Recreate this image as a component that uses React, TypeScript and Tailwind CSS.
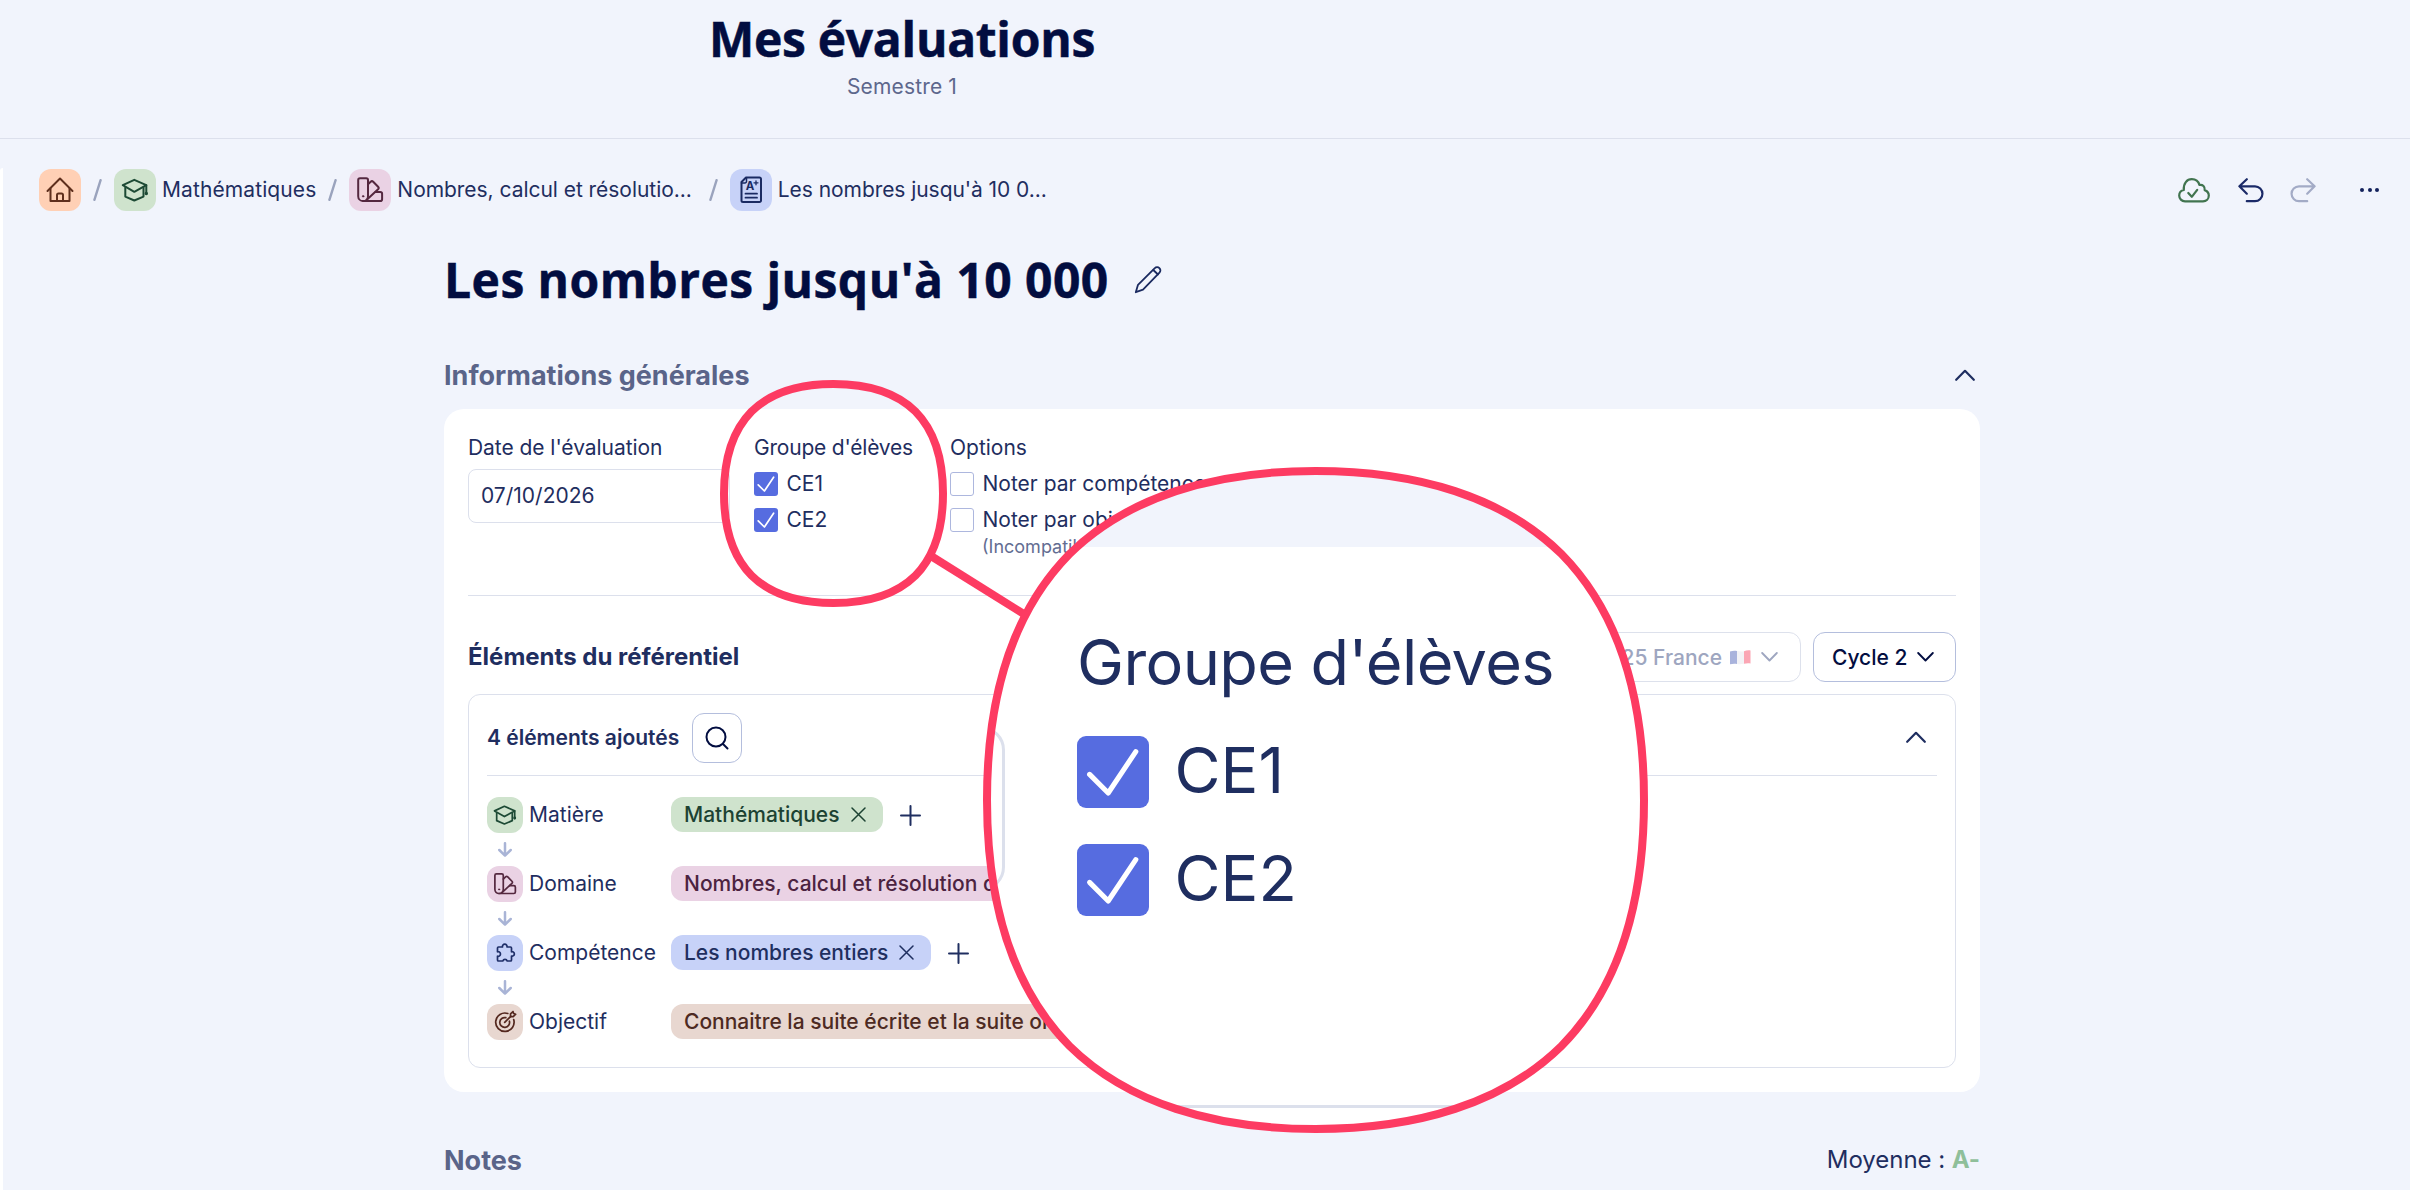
import React from 'react';
import clsx from 'clsx';

type IconProps = { className?: string };

const HomeIcon: React.FC<IconProps> = ({ className }) => (
  <svg viewBox="0 0 42 42" className={className} fill="none" stroke="currentColor" strokeWidth="2" strokeLinecap="round" strokeLinejoin="round">
    <path d="M8.5 22 21 9.5 33.5 22" />
    <path d="M11.5 19.5V32h19V19.5" />
    <path d="M18 32v-6a1.5 1.5 0 0 1 1.5-1.5h3A1.5 1.5 0 0 1 24 26v6" />
  </svg>
);

const CapIcon: React.FC<IconProps> = ({ className }) => (
  <svg viewBox="0 0 42 42" className={className} fill="none" stroke="currentColor" strokeWidth="2" strokeLinecap="round" strokeLinejoin="round">
    <path d="M20.3 10.8 8.8 16.2l11.5 6.6 12-6.6Z" />
    <path d="M11.3 18.4v9.2l9 3.9 9.2-3.9v-9.2" />
    <path d="M32.3 16.2v8M32.3 22.5v2.8" />
    <circle cx="32.3" cy="24.4" r=".7" fill="currentColor" />
  </svg>
);

const SwatchIcon: React.FC<IconProps> = ({ className }) => (
  <svg viewBox="0 0 42 42" className={className} fill="none" stroke="currentColor" strokeWidth="2" strokeLinecap="round" strokeLinejoin="round">
    <path d="M11 9.2h6.2a1.8 1.8 0 0 1 1.8 1.8v16.2a4.9 4.9 0 0 1-9.8 0V11A1.8 1.8 0 0 1 11 9.2Z" />
    <path d="m19 15.2 2.7-2.5a1.8 1.8 0 0 1 2.5 0l4.9 5.1a1.8 1.8 0 0 1 0 2.5L17.5 31" />
    <path d="M26.5 23h4.8a1.8 1.8 0 0 1 1.8 1.8v5.5a1.8 1.8 0 0 1-1.8 1.8H14.1" />
    <circle cx="14.1" cy="27.3" r=".7" fill="currentColor" strokeWidth="1" />
  </svg>
);

const GradedPaperIcon: React.FC<IconProps> = ({ className }) => (
  <svg viewBox="0 0 42 42" className={className} fill="none" stroke="currentColor" strokeWidth="2" strokeLinecap="round" strokeLinejoin="round">
    <path d="M16 8.5h13.5A1.5 1.5 0 0 1 31 10v21.500a1.500 1.500 0 0 1-1.500 1.500H13a1.500 1.500 0 0 1-1.500-1.500V13Z" />
    <path d="M16.500 9v3.500a1.500 1.500 0 0 1-1.500 1.500h-3.500" strokeWidth="1.500" />
    <path d="M15.500 24.700h11.500M15.500 28.700h11.500" strokeWidth="1.800" />
    <path d="M26 11.800v4M24 13.800h4" strokeWidth="1.300" />
    <text x="15.800" y="21.300" fill="currentColor" stroke="none" fontFamily="Inter" fontWeight="700" fontSize="11.500">A</text>
  </svg>
);

const PuzzleIcon: React.FC<IconProps> = ({ className }) => (
  <svg viewBox="0 0 36 36" className={className} fill="none" stroke="currentColor" strokeWidth="1.7" strokeLinecap="round" strokeLinejoin="round">
    <path d="M11.500 12H15.500A2.300 2.300 0 1 1 20 12H23.500A1 1 0 0 1 24.500 13V16.800A2.200 2.200 0 1 1 24.500 21V25A1 1 0 0 1 23.500 26H20.200A2.300 2.300 0 0 0 15.800 26H11.500A1 1 0 0 1 10.500 25V21.200A2.300 2.300 0 1 0 10.500 16.800V13A1 1 0 0 1 11.500 12Z" />
  </svg>
);

const TargetIcon: React.FC<IconProps> = ({ className }) => (
  <svg viewBox="0 0 36 36" className={className} fill="none" stroke="currentColor" strokeWidth="1.7" strokeLinecap="round" strokeLinejoin="round">
    <path d="M20.800 9.500A9.200 9.200 0 1 0 26.700 15.600" />
    <path d="M18.800 13.700A4.900 4.900 0 1 0 22.400 17.200" />
    <path d="M17.700 18.400 23.800 12.300" />
    <path d="M23.500 12.600v-2.700l2.500-2.400.6 2 2.100.7-2.500 2.400Z" />
  </svg>
);

const CloudCheckIcon: React.FC<IconProps> = ({ className }) => (
  <svg viewBox="0 0 32 25" className={className} fill="none" stroke="currentColor" strokeWidth="2.200" strokeLinecap="round" strokeLinejoin="round">
    <path d="M7 23.300C3.700 23.300 1.200 20.800 1.200 17.600c0-3 1.800-5 4.600-5.600C5.300 5.300 9 1.200 13.800 1.200c3.800 0 6.600 2 7.600 5.800 3.400-.6 5.700 1.700 5.300 5.100 2.500.8 4.100 2.800 4.100 5.500 0 3.300-2.500 5.700-5.800 5.700Z" />
    <path d="m10.300 15 3.500 3.800 5.400-7" />
  </svg>
);

const UndoIcon: React.FC<IconProps> = ({ className }) => (
  <svg viewBox="0 0 26 25" className={className} fill="none" stroke="currentColor" strokeWidth="2.200" strokeLinecap="round" strokeLinejoin="round">
    <path d="M8.800 1.200 1.400 8.300l7.400 7.400M1.400 8.300h15.600a7.400 7.400 0 0 1 0 14.900H8.800" />
  </svg>
);

const PencilIcon: React.FC<IconProps> = ({ className }) => (
  <svg viewBox="0 0 28 28" className={className} fill="none" stroke="currentColor" strokeWidth="1.8" strokeLinecap="round" strokeLinejoin="round">
    <path d="M1.800 26.200 4 18.800 20.800 2.200a3.200 3.200 0 0 1 4.700 4.500L9 23.700Z" />
    <path d="m19.300 4 4.700 4.500" />
  </svg>
);

const Chevron: React.FC<IconProps & { up?: boolean }> = ({ className, up }) => (
  <svg viewBox="0 0 20 12" className={className} fill="none" stroke="currentColor" strokeWidth="2.200" strokeLinecap="round" strokeLinejoin="round">
    <path d={up ? 'm1.200 10.800 8.800-9 8.800 9' : 'm1.200 1.200 8.800 9 8.800-9'} />
  </svg>
);

const CrossIcon: React.FC<IconProps> = ({ className }) => (
  <svg viewBox="0 0 15 15" className={className} fill="none" stroke="currentColor" strokeWidth="1.500" strokeLinecap="round">
    <path d="m1 1 13 13M14 1 1 14" />
  </svg>
);

const PlusIcon: React.FC<IconProps> = ({ className }) => (
  <svg viewBox="0 0 21 21" className={className} fill="none" stroke="currentColor" strokeWidth="2" strokeLinecap="round">
    <path d="M10.500 1v19M1 10.500h19" />
  </svg>
);

const SearchIcon: React.FC<IconProps> = ({ className }) => (
  <svg viewBox="0 0 24 24" className={className} fill="none" stroke="currentColor" strokeWidth="2" strokeLinecap="round">
    <circle cx="11" cy="11" r="9.500" />
    <path d="m18 18 4.500 4.500" />
  </svg>
);

const DownArrow: React.FC<IconProps> = ({ className }) => (
  <svg viewBox="0 0 14 15" className={className} fill="none" stroke="currentColor" strokeWidth="2.500" strokeLinecap="round" strokeLinejoin="round">
    <path d="M7 1.200v12.300M1.300 8 7 13.600 12.700 8" />
  </svg>
);

const FrenchFlag: React.FC<IconProps> = ({ className }) => (
  <svg viewBox="0 0 21 15" className={className}>
    <path d="M0 1.500C2.500.6 5 .6 7 1v13c-2-.4-4.500-.4-7 .3Z" fill="#a9b3dc" />
    <path d="M7 1c2.500.4 4.500.8 7 .3v12.500c-2.500.6-4.500.6-7 .2Z" fill="#f3f3f6" />
    <path d="M14 1.300c2-.8 4.500-1.300 6.500-.8v13c-2-.6-4.500-.3-6.500.3Z" fill="#fba6b4" />
  </svg>
);

const Checkbox = ({ label, checked }: { label: string; checked?: boolean }) => (
  <div className="flex h-6 items-center gap-[8.5px]">
    <span
      className={clsx(
        'flex h-6 w-6 shrink-0 items-center justify-center rounded-[3px]',
        checked ? 'bg-[#566ce0]' : 'border border-[#adb7de] bg-white'
      )}
    >
      {checked && (
        <svg viewBox="0 0 24 24" className="h-6 w-6" fill="none" stroke="white" strokeWidth="1.700" strokeLinecap="round" strokeLinejoin="round">
          <path d="m4.200 12.800 6.200 6.200L19.600 5.200" />
        </svg>
      )}
    </span>
    <span className="pb-[2px] whitespace-nowrap">{label}</span>
  </div>
);

const GroupField = () => (
  <div className="w-[196px]">
    <div className="flex h-[29px] items-center tracking-[-0.2px] whitespace-nowrap">Groupe d'élèves</div>
    <div className="mt-[10px] flex flex-col gap-3">
      <Checkbox label="CE1" checked />
      <Checkbox label="CE2" checked />
    </div>
  </div>
);

const crumbs = [
  { icon: HomeIcon, tile: 'bg-[#ffd0b5] text-[#5f2f1d]', label: '', text: '' },
  { icon: CapIcon, tile: 'bg-[#cfe3cd] text-[#1d4a35]', label: 'Mathématiques', text: 'tracking-[0.1px]' },
  { icon: SwatchIcon, tile: 'bg-[#ead2e4] text-[#54283f]', label: 'Nombres, calcul et résolutio...', text: 'pr-[5px] tracking-[-0.04px]' },
  { icon: GradedPaperIcon, tile: 'bg-[#c7d2f8] text-[#1a2a62]', label: "Les nombres jusqu'à 10 0...", text: 'tracking-[-0.06px]' },
];

const elements = [
  { icon: CapIcon, name: 'Matière', tile: 'bg-[#cfe3cd] text-[#1d4a35]', chip: 'bg-[#cfe3cd] text-[#1c4232]', value: 'Mathématiques' },
  { icon: SwatchIcon, name: 'Domaine', tile: 'bg-[#ead2e4] text-[#54283f]', chip: 'bg-[#ead2e4] text-[#4c2340]', value: 'Nombres, calcul et résolution de problèmes' },
  { icon: PuzzleIcon, name: 'Compétence', tile: 'bg-[#c7d2f8] text-[#1f2f68]', chip: 'bg-[#c7d2f8] text-[#1f2f60]', value: 'Les nombres entiers' },
  { icon: TargetIcon, name: 'Objectif', tile: 'bg-[#e8d7d0] text-[#54281f]', chip: 'bg-[#e8d7d0] text-[#4d2a22]', value: 'Connaitre la suite écrite et la suite orale' },
];

const Breadcrumb = () => (
  <nav className="flex h-[42px] items-center pl-9 pr-[31px]">
    {crumbs.map(({ icon: Icon, tile, label, text }, i) => (
      <React.Fragment key={i}>
        {i > 0 && (
          <svg viewBox="0 0 9 22" className="mx-3 h-[22px] w-[9px]" fill="none" stroke="#9aa3bd" strokeWidth="2.400" strokeLinecap="round">
            <path d="M1.400 20.800 7.600 1.200" />
          </svg>
        )}
        <span className={clsx('flex h-[42px] w-[42px] items-center justify-center rounded-xl', tile)}>
          <Icon className="h-[42px] w-[42px]" />
        </span>
        {label && <span className={clsx('ml-[6px] pb-px whitespace-nowrap', text)}>{label}</span>}
      </React.Fragment>
    ))}
    <div className="ml-auto flex items-center">
      <CloudCheckIcon className="h-[25px] w-8 text-[#41744f]" />
      <UndoIcon className="ml-[28px] h-[25px] w-[26px] text-[#1b2a68]" />
      <UndoIcon className="ml-[26px] h-[25px] w-[26px] -scale-x-100 text-[#a3abc6]" />
      <div className="ml-[44px] flex gap-[3.5px]">
        <i className="h-[4px] w-[4px] rounded-full bg-[#14225c]" />
        <i className="h-[4px] w-[4px] rounded-full bg-[#14225c]" />
        <i className="h-[4px] w-[4px] rounded-full bg-[#14225c]" />
      </div>
    </div>
  </nav>
);

const ElementsPanel = () => (
  <div className="mt-3 h-[374px] rounded-xl border border-[#dce0ec] px-[18px] pt-[18px]">
    <div className="flex h-[50px] items-center">
      <span className="pb-px font-semibold">4 éléments ajoutés</span>
      <button className="ml-[13px] flex h-[50px] w-[50px] items-center justify-center rounded-xl border border-[#b4bedd] text-[#020d40]">
        <SearchIcon className="h-6 w-6" />
      </button>
      <Chevron up className="mr-[11px] mb-[2px] ml-auto h-3 w-5" />
    </div>
    <hr className="mt-3 border-[#dce0ec]" />
    <div className="mt-[21px]">
      {elements.map(({ icon: Icon, name, tile, chip, value }, i) => (
        <div key={name}>
          {i > 0 && (
            <div className="flex h-[33px] w-9 items-center justify-center text-[#a9b4d6]">
              <DownArrow className="h-[15px] w-[14px]" />
            </div>
          )}
          <div className="flex h-9 items-center">
            <span className={clsx('flex h-9 w-9 shrink-0 items-center justify-center rounded-xl', tile)}>
              <Icon className="h-9 w-9" />
            </span>
            <span className="ml-[6px] w-[142px] shrink-0 pb-px whitespace-nowrap">{name}</span>
            <span className={clsx('-mt-px flex h-[35px] items-center rounded-xl px-[13px] pb-px font-medium whitespace-nowrap', chip)}>
              {value}
              <CrossIcon className="mr-1 ml-[11px] h-[15px] w-[15px]" />
            </span>
            <PlusIcon className="ml-[17px] h-[21px] w-[21px]" />
          </div>
        </div>
      ))}
    </div>
  </div>
);

// Zoomed copy of the group field, three times the page scale
const Lens = () => (
  <div className="absolute left-[987px] top-[471px] h-[658px] w-[657px] overflow-hidden bg-white [clip-path:path('M328.5_0C430.5_0_516.5_26_574.5_83C631.5_141_657_227_657_329C657_431_631.5_517_574.5_575C516.5_632_430.5_658_328.5_658C226.5_658_140.5_632_82.5_575C25.5_517_0_431_0_329C0_227_25.5_141_82.5_83C140.5_26_226.5_0_328.5_0Z')]">
    <div className="h-[76px] bg-[#f1f4fc]" />
    <div className="absolute left-[90px] top-[148px] origin-top-left scale-300">
      <GroupField />
    </div>
    <div className="absolute -left-[200px] top-[255px] h-[165px] w-[218px] rounded-3xl border-[3px] border-[#dce0ec]" />
    <div className="absolute left-0 top-[634px] h-[3px] w-full bg-[#dce0ec]" />
  </div>
);

const Callout = () => (
  <svg viewBox="0 0 2410 1190" className="absolute inset-0 h-full w-full" fill="none" stroke="#fd3b62" strokeWidth="8">
    <path d="M833.500 384C867.500 384 896.200 392.500 915.500 411.500C934.500 430.800 943 459.500 943 493.500C943 527.500 934.500 556.200 915.500 575.500C896.200 594.500 867.500 603 833.500 603C799.500 603 770.800 594.500 751.500 575.500C732.500 556.200 724 527.500 724 493.500C724 459.500 732.500 430.800 751.500 411.500C770.800 392.500 799.500 384 833.500 384Z" />
    <path d="M1315.500 471C1417.500 471 1503.500 497 1561.500 554C1618.500 612 1644 698 1644 800C1644 902 1618.500 988 1561.500 1046C1503.500 1103 1417.500 1129 1315.500 1129C1213.500 1129 1127.500 1103 1069.500 1046C1012.500 988 987 902 987 800C987 698 1012.500 612 1069.500 554C1127.500 497 1213.500 471 1315.500 471Z" />
    <path d="m931 556 96 60" />
  </svg>
);

export default function App() {
  return (
    <div className="relative h-[1190px] w-[2410px] overflow-hidden bg-[#f1f4fc] font-['Inter',sans-serif] text-[21px] leading-[29px] text-[#1f2e60]">
      <header className="h-[139px] border-b border-[#dce0ec]">
        <div className="flex w-[1804px] flex-col items-center">
          <h1 className="h-[72px] pt-[11px] font-['Open_Sans',sans-serif] text-[48px] leading-[56px] font-bold tracking-[-0.3px] text-[#020d40] [-webkit-text-stroke:0.5px_#020d40]">Mes évaluations</h1>
          <p className="tracking-[0.15px] text-[#5d678c]">Semestre 1</p>
        </div>
      </header>

      <main className="mt-[29px] h-[1022px] rounded-tl-[3px] border-l-[3px] border-white pt-px">
        <Breadcrumb />

        <div className="ml-[441px] w-[1536px]">
          <div className="mt-[39px] flex h-[60px] items-center">
            <h2 className="w-[665px] font-['Open_Sans',sans-serif] text-[48px] leading-[60px] font-bold tracking-[0.45px] whitespace-nowrap text-[#020d40] [-webkit-text-stroke:0.5px_#020d40]">Les nombres jusqu'à 10 000</h2>
            <PencilIcon className="ml-[25px] h-7 w-7 text-[#1b2a60]" />
          </div>

          <div className="mt-[45px] flex h-10 items-center justify-between">
            <h3 className="text-[27px] font-bold text-[#5a6489]">Informations générales</h3>
            <Chevron up className="mr-[5px] h-3 w-5" />
          </div>

          <section className="mt-[14px] h-[683px] rounded-[20px] bg-white px-6 pt-6">
            <div className="flex h-[162px]">
              <div className="w-[262px]">
                <div className="flex h-[29px] items-center tracking-[-0.05px]">Date de l'évaluation</div>
                <div className="mt-[7px] flex h-[54px] items-center rounded-lg border border-[#dce0ec] px-3 pb-px">07/10/2026</div>
              </div>
              <div className="ml-6">
                <GroupField />
              </div>
              <div>
                <div className="flex h-[29px] items-center">Options</div>
                <div className="mt-[10px] flex flex-col gap-3">
                  <Checkbox label="Noter par compétence" />
                  <Checkbox label="Noter par objectif" />
                </div>
                <div className="ml-[32px] mt-[5px] text-[18px] leading-5 whitespace-nowrap text-[#636d92]">(Incompatible avec les compétences)</div>
              </div>
            </div>
            <hr className="border-[#dce0ec]" />

            <div className="mt-9 flex h-[50px] items-center">
              <h4 className="text-2xl font-bold">Éléments du référentiel</h4>
              <button className="ml-auto flex h-[50px] items-center rounded-xl border border-[#dde1ec] pl-[18px] pr-[22px] font-medium text-[#9ea6c0]">
                2025 France
                <FrenchFlag className="ml-2 h-[15px] w-[21px]" />
                <Chevron className="ml-[10px] h-[10px] w-[17px]" />
              </button>
              <button className="ml-3 flex h-[50px] w-[143px] items-center rounded-xl border border-[#b4bedd] pl-[18px] font-medium text-[#020d40]">
                Cycle 2
                <Chevron className="ml-[10px] h-[10px] w-[17px]" />
              </button>
            </div>

            <ElementsPanel />
          </section>

          <div className="mt-[48px] flex h-10 items-center justify-between">
            <h3 className="text-[27px] font-bold text-[#5a6489]">Notes</h3>
            <p className="text-2xl tracking-[-0.05px]">
              Moyenne : <span className="font-bold text-[#8fbf9a]">A-</span>
            </p>
          </div>
        </div>
      </main>

      <Lens />
      <Callout />
    </div>
  );
}
